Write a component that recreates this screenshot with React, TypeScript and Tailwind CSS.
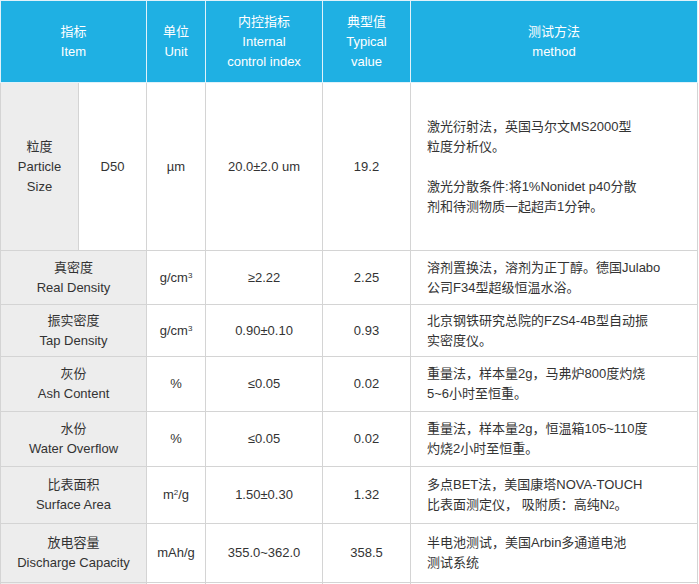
const rows = [
  { zh: '真密度', en: 'Real Density', unit: <>g/cm<sup className="text-[8px]">3</sup></>, ctrl: '≥2.22', typ: '2.25', m: ['溶剂置换法，溶剂为正丁醇。德国Julabo', '公司F34型超级恒温水浴。'], h: 'h-[54px]' },
  { zh: '振实密度', en: 'Tap Density', unit: <>g/cm<sup className="text-[8px]">3</sup></>, ctrl: '0.90±0.10', typ: '0.93', m: ['北京钢铁研究总院的FZS4-4B型自动振', '实密度仪。'], h: 'h-[52px]' },
  { zh: '灰份', en: 'Ash Content', unit: '%', ctrl: '≤0.05', typ: '0.02', m: ['重量法，样本量2g，马弗炉800度灼烧', '5~6小时至恒重。'], h: 'h-[55px]' },
  { zh: '水份', en: 'Water Overflow', unit: '%', ctrl: '≤0.05', typ: '0.02', m: ['重量法，样本量2g，恒温箱105~110度', '灼烧2小时至恒重。'], h: 'h-[55px]' },
  { zh: '比表面积', en: 'Surface Area', unit: <>m<sup className="text-[8px]">2</sup>/g</>, ctrl: '1.50±0.30', typ: '1.32', m: ['多点BET法，美国康塔NOVA-TOUCH', <>比表面测定仪， 吸附质：高纯N<span className="text-[10px]">2</span>。</>], h: 'h-[57px]' },
  { zh: '放电容量', en: 'Discharge Capacity', unit: 'mAh/g', ctrl: '355.0~362.0', typ: '358.5', m: ['半电池测试，美国Arbin多通道电池', '测试系统'], h: 'h-[59px]' },
];

const td = 'border border-[#d4d4d4] text-center align-middle';

export default function App() {
  return (
    <div className="w-[699px] bg-white text-[13px] leading-[20px] text-[#333] font-[Liberation_Sans,Noto_Sans_CJK_SC,sans-serif]">
      <table className="border-collapse table-fixed w-[698px]">
        <colgroup>
          <col className="w-[78px]" />
          <col className="w-[68px]" />
          <col className="w-[59px]" />
          <col className="w-[117px]" />
          <col className="w-[88px]" />
          <col />
        </colgroup>
        <thead>
          <tr className="h-[82px] bg-[#1fb0e3] text-white">
            <th colSpan={2} className="border border-[#e0f2fa] font-normal">指标<br />Item</th>
            <th className="border border-[#e0f2fa] font-normal">单位<br />Unit</th>
            <th className="border border-[#e0f2fa] font-normal">内控指标<br />Internal<br />control index</th>
            <th className="border border-[#e0f2fa] font-normal">典型值<br />Typical<br />value</th>
            <th className="border border-[#e0f2fa] font-normal">测试方法<br />method</th>
          </tr>
        </thead>
        <tbody>
          <tr className="h-[168px]">
            <td className={`${td} bg-[#ededed]`}>粒度<br />Particle<br />Size</td>
            <td className={td}>D50</td>
            <td className={td}>µm</td>
            <td className={td}>20.0±2.0 um</td>
            <td className={td}>19.2</td>
            <td className="border border-[#d4d4d4] px-4 align-middle">
              <p>激光衍射法，英国马尔文MS2000型<br />粒度分析仪。</p>
              <p className="mt-5">激光分散条件:将1%Nonidet p40分散<br />剂和待测物质一起超声1分钟。</p>
            </td>
          </tr>
          {rows.map((r) => (
            <tr key={r.en} className={r.h}>
              <td colSpan={2} className={`${td} bg-[#ededed]`}>{r.zh}<br />{r.en}</td>
              <td className={td}>{r.unit}</td>
              <td className={td}>{r.ctrl}</td>
              <td className={td}>{r.typ}</td>
              <td className="border border-[#d4d4d4] px-4 align-middle">{r.m[0]}<br />{r.m[1]}</td>
            </tr>
          ))}
          <tr className="h-[40px]">
            <td colSpan={2} className={`${td} bg-[#ededed]`}></td>
            <td className={td}></td>
            <td className={td}></td>
            <td className={td}></td>
            <td className="border border-[#d4d4d4]"></td>
          </tr>
        </tbody>
      </table>
    </div>
  );
}
